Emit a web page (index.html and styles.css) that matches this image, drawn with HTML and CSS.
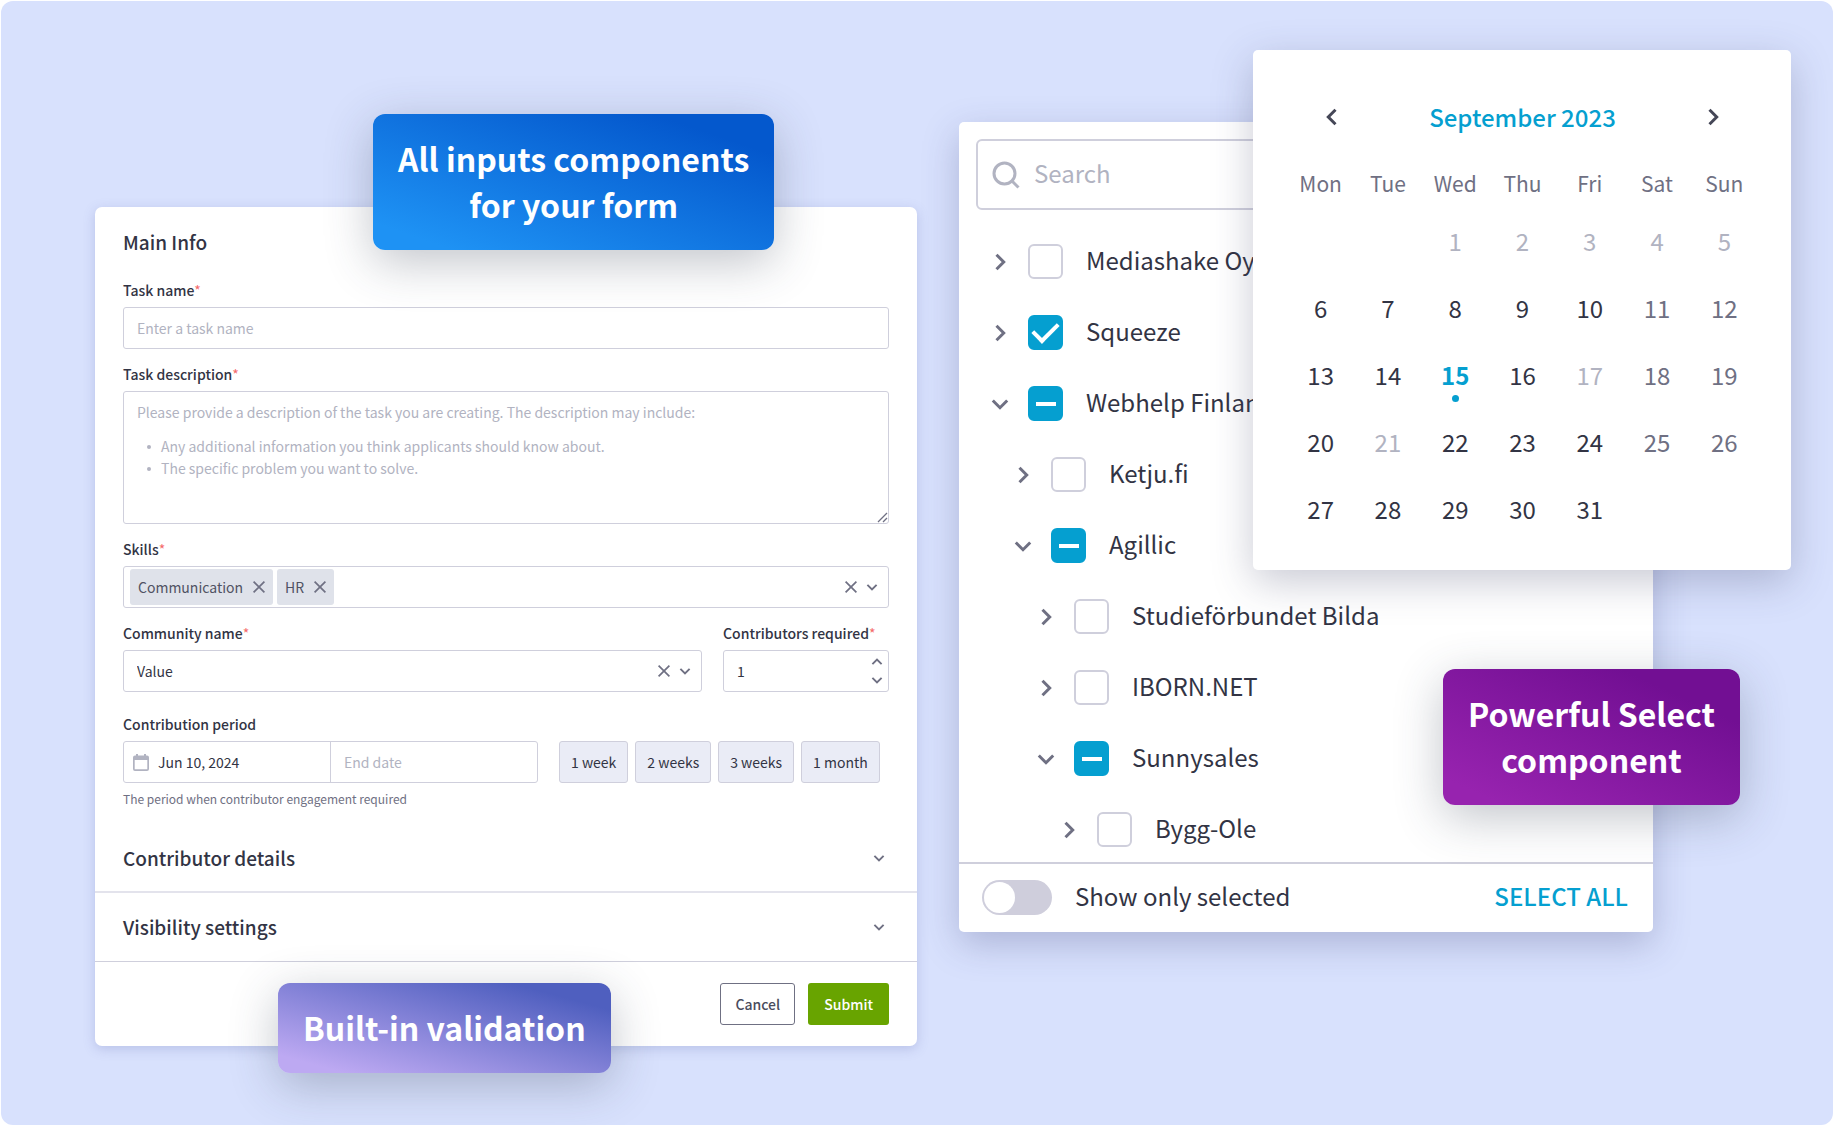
FILE: index.html
```html
<!DOCTYPE html>
<html lang="en">
<head>
<meta charset="utf-8">
<meta name="viewport" content="width=device-width, initial-scale=1">
<title>Form components</title>
<link rel="stylesheet" href="styles.css">
</head>
<body>
<svg class="sprite" aria-hidden="true">
  <symbol id="chevron" viewBox="0 0 16 16"><path d="M3.4 5.800 8 10.400 12.600 5.800" fill="none" stroke="currentColor" stroke-width="1.900"/></symbol>
  <symbol id="cross" viewBox="0 0 16 16"><path d="M2.6 2.6 13.4 13.4M13.4 2.6 2.6 13.4" fill="none" stroke="currentColor" stroke-width="1.7"/></symbol>
  <symbol id="angle" viewBox="0 0 24 24"><path d="M8.5 4.8 15.7 12 8.5 19.2" fill="none" stroke="currentColor" stroke-width="3"/></symbol>
  <symbol id="calendar" viewBox="0 0 16 17"><path d="M2 1.5h1V0h2v1.5h6V0h2v1.5h1a2 2 0 0 1 2 2V15a2 2 0 0 1-2 2H2a2 2 0 0 1-2-2V3.500a2 2 0 0 1 2-2ZM1.700 6v9.300h12.600V6Z" fill="currentColor" fill-rule="evenodd"/></symbol>
  <symbol id="search" viewBox="0 0 28 28"><circle cx="12.500" cy="12.500" r="10.500" fill="none" stroke="currentColor" stroke-width="3"/><path d="M19.500 19.500 26.500 26.500" stroke="currentColor" stroke-width="3"/></symbol>
  <symbol id="grip" viewBox="0 0 12 12"><path d="M2 11 11 2M7 11 11 7" fill="none" stroke="currentColor" stroke-width="1.300"/></symbol>
</svg>

<main class="stage">
  <section class="form-column">
    <form class="card form-card">
      <div class="form-body">
        <h2 class="section-title">Main Info</h2>

        <div class="field">
          <label class="label" for="task-name">Task name<span class="required">*</span></label>
          <input class="control" id="task-name" type="text" placeholder="Enter a task name">
        </div>

        <div class="field">
          <label class="label" for="task-description">Task description<span class="required">*</span></label>
          <div class="textarea-wrap">
            <textarea class="control textarea" id="task-description" aria-describedby="description-help"></textarea>
            <div class="textarea-help" id="description-help">
              <p>Please provide a description of the task you are creating. The description may include:</p>
              <ul>
                <li>Any additional information you think applicants should know about.</li>
                <li>The specific problem you want to solve.</li>
              </ul>
            </div>
            <svg class="grip"><use href="#grip"/></svg>
          </div>
        </div>

        <div class="field">
          <label class="label" for="skills">Skills<span class="required">*</span></label>
          <div class="control combo tags">
            <span class="tag">Communication<button class="icon-button" type="button" aria-label="Remove Communication"><svg class="icon"><use href="#cross"/></svg></button></span>
            <span class="tag">HR<button class="icon-button" type="button" aria-label="Remove HR"><svg class="icon"><use href="#cross"/></svg></button></span>
            <input class="bare" id="skills" type="text">
            <button class="icon-button" type="button" aria-label="Clear skills"><svg class="icon"><use href="#cross"/></svg></button>
            <button class="icon-button" type="button" aria-label="Open skills"><svg class="icon"><use href="#chevron"/></svg></button>
          </div>
        </div>

        <div class="pair">
          <div class="field">
            <label class="label" for="community">Community name<span class="required">*</span></label>
            <div class="control combo">
              <select class="bare" id="community"><option>Value</option></select>
              <button class="icon-button" type="button" aria-label="Clear community"><svg class="icon"><use href="#cross"/></svg></button>
              <svg class="icon"><use href="#chevron"/></svg>
            </div>
          </div>
          <div class="field">
            <label class="label" for="contributors">Contributors required<span class="required">*</span></label>
            <div class="control combo number">
              <input class="bare" id="contributors" type="number" value="1">
              <div class="stepper">
                <button class="icon-button" type="button" aria-label="Increase"><svg class="icon up"><use href="#chevron"/></svg></button>
                <button class="icon-button" type="button" aria-label="Decrease"><svg class="icon"><use href="#chevron"/></svg></button>
              </div>
            </div>
          </div>
        </div>

        <div class="field period">
          <label class="label" for="start-date">Contribution period</label>
          <div class="period-row">
            <div class="control combo dates">
              <svg class="calendar-icon"><use href="#calendar"/></svg>
              <input class="bare" id="start-date" type="text" value="Jun 10, 2024">
              <input class="bare end-date" type="text" placeholder="End date" aria-label="End date">
            </div>
            <div class="presets">
              <button class="preset" type="button">1 week</button>
              <button class="preset" type="button">2 weeks</button>
              <button class="preset" type="button">3 weeks</button>
              <button class="preset" type="button">1 month</button>
            </div>
          </div>
          <p class="hint">The period when contributor engagement required</p>
        </div>
      </div>

      <button class="accordion" type="button">Contributor details<svg class="icon"><use href="#chevron"/></svg></button>
      <button class="accordion last" type="button">Visibility settings<svg class="icon"><use href="#chevron"/></svg></button>

      <div class="form-actions">
        <button class="button outline" type="button">Cancel</button>
        <button class="button primary" type="submit">Submit</button>
      </div>
    </form>
    <p class="badge badge-inputs">All inputs components<br>for your form</p>
    <p class="badge badge-validation">Built-in validation</p>
  </section>

  <section class="select-column">
    <div class="card select-card">
      <label class="search">
        <svg class="search-icon"><use href="#search"/></svg>
        <input class="search-input" type="search" placeholder="Search" aria-label="Search">
      </label>
      <ul class="tree">
        <li class="node"><svg class="angle"><use href="#angle"/></svg><label class="choice"><input class="check" type="checkbox">Mediashake Oy</label></li>
        <li class="node"><svg class="angle"><use href="#angle"/></svg><label class="choice"><input class="check" type="checkbox" checked>Squeeze</label></li>
        <li class="node"><svg class="angle open"><use href="#angle"/></svg><label class="choice"><input class="check mixed" type="checkbox" aria-checked="mixed">Webhelp Finland</label></li>
        <li class="node level-2"><svg class="angle"><use href="#angle"/></svg><label class="choice"><input class="check" type="checkbox">Ketju.fi</label></li>
        <li class="node level-2"><svg class="angle open"><use href="#angle"/></svg><label class="choice"><input class="check mixed" type="checkbox" aria-checked="mixed">Agillic</label></li>
        <li class="node level-3"><svg class="angle"><use href="#angle"/></svg><label class="choice"><input class="check" type="checkbox">Studieförbundet Bilda</label></li>
        <li class="node level-3"><svg class="angle"><use href="#angle"/></svg><label class="choice"><input class="check" type="checkbox">IBORN.NET</label></li>
        <li class="node level-3"><svg class="angle open"><use href="#angle"/></svg><label class="choice"><input class="check mixed" type="checkbox" aria-checked="mixed">Sunnysales</label></li>
        <li class="node level-4"><svg class="angle"><use href="#angle"/></svg><label class="choice"><input class="check" type="checkbox">Bygg-Ole</label></li>
      </ul>
      <div class="select-footer">
        <label class="choice"><input class="switch" type="checkbox" role="switch">Show only selected</label>
        <button class="select-all" type="button">SELECT ALL</button>
      </div>
    </div>

    <div class="card calendar">
      <div class="calendar-head">
        <button class="arrow" type="button" aria-label="Previous month"><svg class="angle back"><use href="#angle"/></svg></button>
        <h2 class="month">September 2023</h2>
        <button class="arrow" type="button" aria-label="Next month"><svg class="angle"><use href="#angle"/></svg></button>
      </div>
      <table class="days">
        <thead><tr><th>Mon</th><th>Tue</th><th>Wed</th><th>Thu</th><th>Fri</th><th>Sat</th><th>Sun</th></tr></thead>
        <tbody>
          <tr><td></td><td></td><td class="off">1</td><td class="off">2</td><td class="off">3</td><td class="off">4</td><td class="off">5</td></tr>
          <tr><td>6</td><td>7</td><td>8</td><td>9</td><td>10</td><td class="weekend">11</td><td class="weekend">12</td></tr>
          <tr><td>13</td><td>14</td><td class="today">15</td><td>16</td><td class="off">17</td><td class="weekend">18</td><td class="weekend">19</td></tr>
          <tr><td>20</td><td class="off">21</td><td>22</td><td>23</td><td>24</td><td class="weekend">25</td><td class="weekend">26</td></tr>
          <tr><td>27</td><td>28</td><td>29</td><td>30</td><td>31</td><td></td><td></td></tr>
        </tbody>
      </table>
    </div>
    <p class="badge badge-select">Powerful Select<br>component</p>
  </section>
</main>
</body>
</html>
```
FILE: styles.css
```css
:root {
  --ink: #323444;
  --muted: #6f7083;
  --faint: #b1b3c1;
  --line: #cfcfdc;
  --accent: #059fd0;
}

* { box-sizing: border-box; }

body {
  margin: 0;
  padding: 1px 0 0 1px;
  background: #fff;
  color: var(--ink);
  font: 400 14px/22px "Noto Sans CJK SC", "Noto Sans", sans-serif;
}

h2, p, ul { margin: 0; padding: 0; }
ul { list-style: none; }
input, select, textarea, button { font: inherit; color: inherit; }
button { padding: 0; border: 0; background: none; cursor: pointer; }
svg { display: block; flex: none; }
.sprite { position: absolute; width: 0; height: 0; }

.stage {
  display: grid;
  grid-template-columns: 822fr 694fr;
  gap: 42px;
  align-items: start;
  min-height: calc(100vh - 1px);
  padding: 121px 180px 79px 94px;
  border-radius: 12px;
  background: #d8e1fd;
}

.form-column, .select-column { position: relative; }
.form-column { margin-top: 85px; }

.card { background: #fff; }
.form-card { border-radius: 7px; box-shadow: 0 3px 12px rgba(90, 100, 170, .25); }

/* Form */
.form-body { padding: 21px 28px 15px; }
.section-title { margin-bottom: 9px; font-size: 19px; line-height: 28px; font-weight: 500; }
.field { padding-top: 14px; min-width: 0; }
.label { display: block; margin-bottom: 5px; line-height: 23px; font-weight: 500; }
.required { color: #f46a6a; font-weight: 400; }

.control {
  display: block;
  width: 100%;
  height: 42px;
  padding: 0 13px 1px;
  border: 1px solid var(--line);
  border-radius: 3px;
  background: transparent;
  outline: 0;
}
::placeholder { color: var(--faint); opacity: 1; }

.textarea-wrap { position: relative; }
.textarea { height: 133px; resize: none; }
.textarea-help { position: absolute; inset: 10px 14px auto; color: var(--faint); pointer-events: none; }
.textarea-help p { margin-bottom: 12px; }
.textarea-help li { position: relative; padding-left: 24px; }
.textarea-help li::before {
  content: "";
  position: absolute;
  left: 10px;
  top: 10px;
  width: 4px;
  height: 4px;
  border-radius: 50%;
  background: var(--faint);
}
.grip { position: absolute; right: 1px; bottom: 1px; width: 12px; height: 12px; color: var(--muted); }

.combo { display: flex; align-items: center; gap: 5px; padding-right: 8px; padding-bottom: 0; }
.bare {
  flex: 1;
  min-width: 0;
  width: 0;
  height: 100%;
  padding: 0 0 1px;
  border: 0;
  background: none;
  outline: 0;
  appearance: none;
}
.icon { width: 16px; height: 16px; color: var(--muted); }
.icon-button { flex: none; }
.up { transform: rotate(180deg); }

.tags { gap: 4px; padding-left: 6px; }
.tags > .icon-button + .icon-button { margin-left: 1px; }
.tag {
  display: flex;
  align-items: center;
  gap: 8px;
  height: 36px;
  padding: 0 6px 0 8px;
  border-radius: 3px;
  background: #dfe2ea;
  color: #505263;
}

.pair { display: grid; grid-template-columns: 1fr 166px; gap: 21px; }
.number { padding-right: 3px; }
.number .bare { appearance: textfield; }
.number .bare::-webkit-inner-spin-button { appearance: none; }
.stepper { display: grid; gap: 2px; }

.period { padding-top: 21px; }
.period-row { display: flex; gap: 21px; }
.dates { flex: 0 1 415px; gap: 9px; padding: 0 0 0 9px; }
.calendar-icon { width: 16px; height: 17px; color: var(--faint); }
.end-date { flex: 0 0 207px; padding-left: 13px; border-left: 1px solid var(--line); }
.presets { display: flex; gap: 7px; }
.preset {
  height: 42px;
  padding: 0 11px;
  border: 1px solid var(--line);
  border-radius: 3px;
  background: #eaecf6;
  white-space: nowrap;
}
.hint { margin-top: 5px; font-size: 12px; line-height: 21px; color: var(--muted); }

.accordion {
  display: flex;
  align-items: center;
  justify-content: space-between;
  width: 100%;
  height: 69px;
  padding: 0 30px 0 28px;
  border-bottom: 2px solid #e3e3ec;
  font-size: 19px;
  font-weight: 500;
}
.accordion.last { border-bottom: 1px solid var(--line); }

.form-actions { display: flex; justify-content: flex-end; gap: 13px; padding: 21px 28px; }
.button { height: 42px; padding: 0 16px 1px; border-radius: 3px; font-weight: 500; }
.outline { padding: 0 14px 1px; border: 1px solid var(--muted); color: #4a4c5d; background: #fff; }
.primary { background: #68a400; color: #fff; }

/* Labels over the cards */
.badge {
  position: absolute;
  padding: 21px 25px 23px;
  border-radius: 12px;
  color: #fff;
  font-size: 32px;
  line-height: 46px;
  font-weight: 700;
  text-align: center;
  white-space: nowrap;
  box-shadow: 0 12px 48px rgba(50, 60, 80, .3);
}
.badge-inputs { left: 278px; top: -93px; background: linear-gradient(to top right, #1e92f4 10%, #0458cd 85%); }
.badge-validation { left: 183px; bottom: -27px; background: linear-gradient(to top right, #bda9f2 10%, #4f5fbf 85%); }
.badge-select { right: -87px; bottom: 127px; background: linear-gradient(to top right, #9723af 10%, #720f93 80%); }

/* Tree select */
.select-card { border-radius: 5px; font-size: 24px; line-height: 31px; box-shadow: 0 12px 36px rgba(60, 65, 120, .28); padding-top: 17px; }
.search {
  display: flex;
  align-items: center;
  gap: 14px;
  height: 71px;
  margin: 0 17px;
  padding: 0 14px;
  border: 2px solid var(--line);
  border-radius: 6px;
}
.search-icon { width: 28px; height: 28px; color: var(--faint); }
.search-input { flex: 1; min-width: 0; padding: 0 0 4px; border: 0; background: none; outline: 0; }

.tree { display: grid; gap: 36px; padding: 34px 29px 15px; }
.node { display: flex; gap: 16px; align-items: center; height: 35px; }
.level-2 { padding-left: 23px; }
.level-3 { padding-left: 46px; }
.level-4 { padding-left: 69px; }
.angle { width: 24px; height: 24px; color: var(--muted); }
.open { transform: rotate(90deg); }
.back { transform: rotate(180deg); }
.choice { display: flex; align-items: flex-start; gap: 23px; }
.check {
  display: grid;
  place-items: center;
  width: 35px;
  height: 35px;
  margin: 0;
  border: 2px solid var(--line);
  border-radius: 6px;
  background: #fff;
  appearance: none;
}
.check:checked, .mixed { border-color: var(--accent); background: var(--accent); }
.check:checked::after {
  content: "";
  width: 21px;
  height: 11px;
  margin-bottom: 6px;
  border: solid #fff;
  border-width: 0 0 4px 4px;
  transform: rotate(-45deg);
}
.mixed::after { content: ""; width: 20px; height: 4px; background: #fff; }

.select-footer {
  display: flex;
  align-items: flex-start;
  justify-content: space-between;
  padding: 16px 25px 17px 23px;
  border-top: 2px solid var(--line);
}
.switch {
  width: 70px;
  height: 35px;
  margin: 0;
  padding: 2px;
  border-radius: 18px;
  background: #cfcedc;
  appearance: none;
}
.switch::before { content: ""; display: block; width: 31px; height: 31px; border-radius: 50%; background: #fff; }
.select-all { color: var(--accent); font-weight: 500; }

/* Calendar */
.calendar {
  position: absolute;
  top: -72px;
  right: -138px;
  width: 538px;
  padding: 49px 33px 28px 34px;
  border-radius: 5px;
  font-size: 24px;
  line-height: 35px;
  box-shadow: 0 12px 40px rgba(60, 65, 100, .28);
}
.calendar-head { display: flex; align-items: center; justify-content: space-between; padding: 0 33px; }
.arrow .angle { color: #454757; }
.month { font-size: 24px; font-weight: 500; color: var(--accent); }
.days { width: 100%; margin-top: 26px; border-collapse: collapse; table-layout: fixed; text-align: center; }
.days th { height: 47px; padding: 0; font-size: 21px; font-weight: 400; color: var(--muted); }
.days td { position: relative; height: 67px; padding: 0; }
.days .off { color: var(--faint); }
.days .weekend { color: var(--muted); }
.days .today { color: var(--accent); font-weight: 700; }
.today::after {
  content: "";
  position: absolute;
  left: 50%;
  bottom: 6px;
  width: 7px;
  height: 7px;
  margin-left: -3px;
  border-radius: 50%;
  background: var(--accent);
}
```
